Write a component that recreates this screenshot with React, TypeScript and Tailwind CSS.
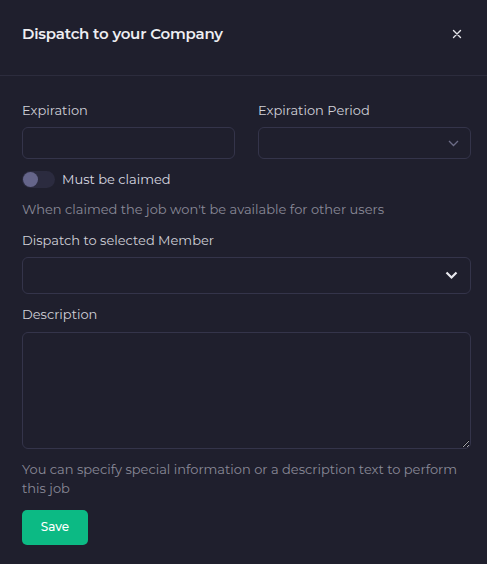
import React from "react";

const font = { fontFamily: '"Montserrat", "Open Sans", "Noto Sans", sans-serif' };

export default function App() {
  return (
    <div className="w-[487px] h-[564px] bg-[#1f1f2d] text-[#d4d4dc] overflow-hidden" style={font}>
      <div className="h-[76px] border-b border-[#2c2c3d] flex items-start justify-between pt-[24px] pl-[22px] pr-[25px]">
        <h2 className="text-[15px] leading-[20px] font-semibold text-[#eeeef2] tracking-[-0.2px]">Dispatch to your Company</h2>
        <svg width="10" height="10" viewBox="0 0 10 10" className="text-[#e5e5ea] mt-[5px]">
          <path d="M1.5 1.5 L8.5 8.5 M8.5 1.5 L1.5 8.5" stroke="currentColor" strokeWidth="1.4" strokeLinecap="round" />
        </svg>
      </div>
      <div className="pl-[22px] pr-[16px] pt-[25px] flex flex-col">
        <div className="grid grid-cols-2 gap-[23px]">
          <div className="flex flex-col">
            <label className="text-[13px] leading-[18px] text-[#d0d0d8]">Expiration</label>
            <div className="mt-[8px] h-[32px] rounded-[6px] border border-[#34344a]" />
          </div>
          <div className="flex flex-col">
            <label className="text-[13px] leading-[18px] text-[#d0d0d8]">Expiration Period</label>
            <div className="mt-[8px] h-[32px] rounded-[6px] border border-[#34344a] flex items-center justify-end pr-[11px]">
              <svg width="11" height="7" viewBox="0 0 11 7">
                <path d="M1 1 L5.5 5.5 L10 1" fill="none" stroke="#6c6c86" strokeWidth="1.3" />
              </svg>
            </div>
          </div>
        </div>
        <div className="mt-[11px] flex items-center gap-[7px]">
          <div className="w-[33px] h-[17px] rounded-full bg-[#2b2b3f] flex items-center pl-[1px]">
            <div className="w-[15px] h-[15px] rounded-full bg-[#65658a]" />
          </div>
          <span className="text-[13px] text-[#d8d8e0]">Must be claimed</span>
        </div>
        <p className="mt-[10px] text-[13px] leading-[18px] text-[#8a8a98]">When claimed the job won't be available for other users</p>
        <label className="mt-[13px] text-[13px] leading-[18px] text-[#d0d0d8]">Dispatch to selected Member</label>
        <div className="mt-[8px] h-[37px] rounded-[6px] border border-[#34344a] flex items-center justify-end pr-[12px]">
          <svg width="13" height="9" viewBox="0 0 13 9">
            <path d="M1.5 1.5 L6.5 6.5 L11.5 1.5" fill="none" stroke="#e8e8ee" strokeWidth="2.2" />
          </svg>
        </div>
        <label className="mt-[11px] text-[13px] leading-[18px] text-[#d0d0d8]">Description</label>
        <textarea className="block mt-[9px] h-[117px] rounded-[6px] border border-[#34344a] bg-transparent outline-none resize-y" />
        <p className="mt-[11px] text-[13px] leading-[19px] text-[#8a8a98]">You can specify special information or a description text to perform this job</p>
        <div className="mt-[12px]">
          <button className="w-[66px] h-[35px] rounded-[5px] bg-[#0cba84] text-white text-[12px] font-medium">Save</button>
        </div>
      </div>
    </div>
  );
}
